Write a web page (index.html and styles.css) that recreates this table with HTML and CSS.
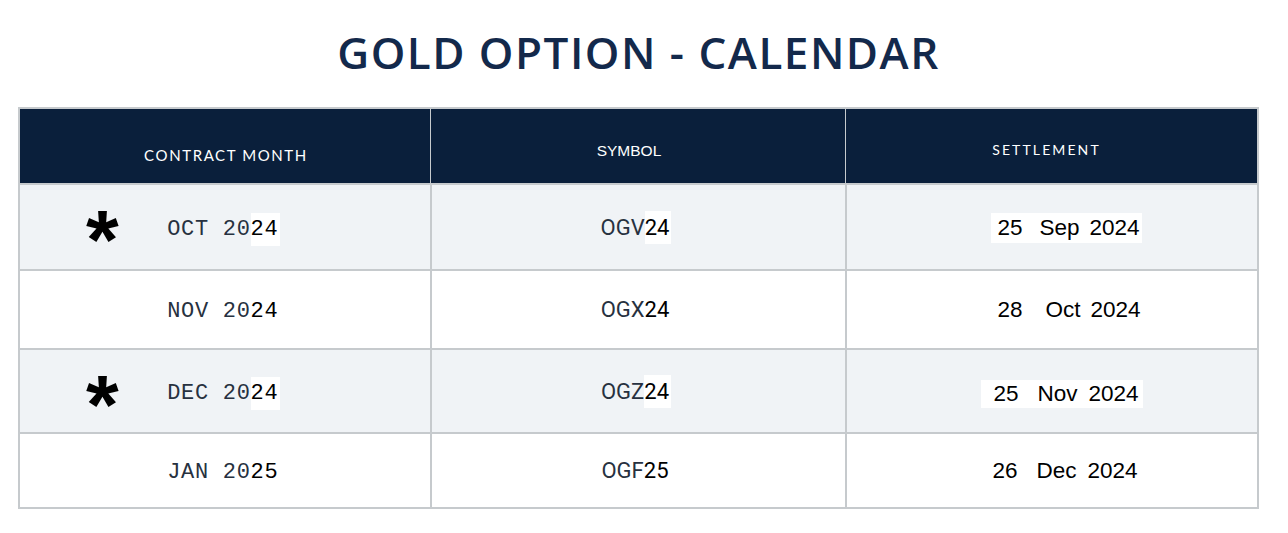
FILE: index.html
```html
<!DOCTYPE html>
<html>
<head>
<meta charset="utf-8">
<link rel="stylesheet" href="styles.css">
</head>
<body>
<h1 class="title">GOLD OPTION - CALENDAR</h1>
<table class="cal">
  <thead>
    <tr>
      <th class="h-month"><span class="lbl">CONTRACT MONTH</span></th>
      <th class="h-symbol"><span class="lbl">SYMBOL</span></th>
      <th class="h-settle"><span class="lbl">SETTLEMENT</span></th>
    </tr>
  </thead>
  <tbody>
    <tr class="alt r1">
      <td class="month"><span class="star">*</span><span class="mt">OCT 20<span class="patch">24</span></span></td>
      <td class="symbol">OGV<span class="patch">24</span></td>
      <td class="settle"><span class="sv patch wide"><span class="d">25</span><span class="m">Sep</span><span class="y">2024</span></span></td>
    </tr>
    <tr class="r2">
      <td class="month"><span class="mt">NOV 20<span class="patch">24</span></span></td>
      <td class="symbol">OGX<span class="patch">24</span></td>
      <td class="settle"><span class="sv"><span class="d">28</span><span class="m">Oct</span><span class="y">2024</span></span></td>
    </tr>
    <tr class="alt r3">
      <td class="month"><span class="star">*</span><span class="mt">DEC 20<span class="patch">24</span></span></td>
      <td class="symbol">OGZ<span class="patch">24</span></td>
      <td class="settle"><span class="sv patch wide"><span class="d">25</span><span class="m">Nov</span><span class="y">2024</span></span></td>
    </tr>
    <tr class="r4">
      <td class="month"><span class="mt">JAN 20<span class="patch">25</span></span></td>
      <td class="symbol">OGF<span class="patch">25</span></td>
      <td class="settle"><span class="sv"><span class="d">26</span><span class="m">Dec</span><span class="y">2024</span></span></td>
    </tr>
  </tbody>
</table>
</body>
</html>
```

FILE: styles.css
```css
html, body {
  margin: 0;
  padding: 0;
  background: #ffffff;
}
body {
  padding: 0 29px 0 18px;
  font-family: "Open Sans", "Liberation Sans", sans-serif;
}
.title {
  margin: 0;
  padding-top: 27px;
  height: 80px;
  box-sizing: border-box;
  text-align: center;
  font-family: "Open Sans", sans-serif;
  font-weight: 600;
  font-size: 44px;
  line-height: 50px;
  letter-spacing: 1.5px;
  color: #13294b;
}
.cal {
  width: 1241px;
  margin-top: 27px;
  border-collapse: collapse;
  table-layout: fixed;
  border: 2px solid #c6cacd;
}
.cal th {
  background: #0a1f3b;
  color: #ffffff;
  font-weight: 400;
  height: 64px;
  padding: 10px 0 0 0;
  border-left: 1px solid #c6cacd;
  text-align: center;
  vertical-align: middle;
}
.cal th:first-child { border-left: none; width: 410px; }
.cal th:nth-child(2) { width: 414px; }
.lbl { display: inline-block; }
.h-month {
  font-family: "Lato", sans-serif;
  font-size: 15px;
  letter-spacing: 1.6px;
}
.h-month .lbl { margin-top: 8px; margin-left: 2px; }
.h-symbol {
  font-family: "Liberation Sans", sans-serif;
  font-size: 15.5px;
}
.h-symbol .lbl { margin-right: 18px; }
.h-settle {
  font-family: "Lato", sans-serif;
  font-size: 14px;
  letter-spacing: 2.1px;
}
.h-settle .lbl { margin-right: 10px; margin-bottom: 4px; }
.cal td {
  padding: 0;
  text-align: center;
  border-top: 2px solid #c6cacd;
  border-left: 2px solid #c6cacd;
}
.cal td:first-child { border-left: none; }
.cal tr.alt td { background: #f0f3f6; }
.r1 td { height: 84px; }
.r2 td { height: 77px; }
.r3 td { height: 82px; }
.r4 td { height: 73px; }
.month {
  position: relative;
  font-family: "Liberation Mono", monospace;
  font-size: 22px;
  letter-spacing: 0.7px;
  color: #273140;
  padding-right: 2px !important;
}
.mt { display: inline-block; margin-top: 4px; }
.symbol {
  font-family: "Roboto", sans-serif;
  font-size: 22px;
  color: #273140;
  padding-right: 4px !important;
}
.settle {
  font-family: "Liberation Sans", Arial, sans-serif;
  font-size: 22.5px;
  color: #000000;
  text-align: left !important;
}
.r1 .settle { padding-left: 144px !important; }
.r2 .settle { padding-left: 151px !important; }
.r3 .settle { padding-left: 134px !important; }
.r4 .settle { padding-left: 146px !important; }
.patch {
  background: #ffffff;
  color: #000000;
  padding: 4px 2px 4px 0;
}
.sv { display: inline-block; line-height: 28px; }
.sv span { display: inline-block; }
.patch.wide { padding: 1px 2px 1px 7px; margin-top: 2px; }
.r3 .patch.wide { padding: 0 4px 0 13px; margin-top: 6px; }
.r1 .m { margin-left: 17px; }
.r1 .y { margin-left: 10px; }
.r2 .m { margin-left: 23px; }
.r2 .y { margin-left: 10px; }
.r3 .m { margin-left: 19px; }
.r3 .y { margin-left: 11px; }
.r4 .m { margin-left: 19px; }
.r4 .y { margin-left: 11px; }
.star {
  position: absolute;
  left: 66px;
  top: 13px;
  font-family: "Liberation Sans", Arial, sans-serif;
  font-weight: 700;
  font-size: 84px;
  line-height: 84px;
  color: #000000;
}
```
